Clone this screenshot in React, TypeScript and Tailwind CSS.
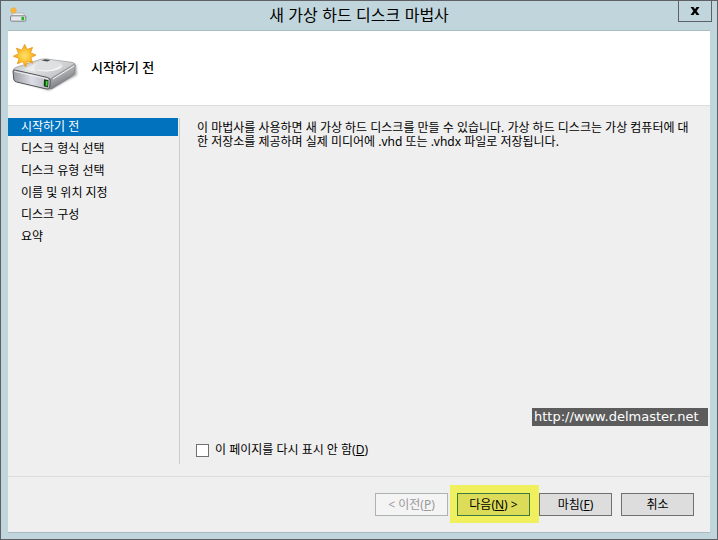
import { useState } from "react";

const steps = ["시작하기 전", "디스크 형식 선택", "디스크 유형 선택", "이름 및 위치 지정", "디스크 구성", "요약"];

const STAR =
  "M12 0 L14.6 5.4 L20.4 3.2 L18.2 8.8 L24 11.4 L18.5 14 L20.6 20 L15 17.8 L13 24 L10 18.3 L4.2 20.6 L6.2 15 L0 12.6 L5.6 9.9 L3.2 4 L9 6.1 Z";

function NewDriveIcon() {
  return (
    <svg viewBox="0 0 68 52" className="h-[52px] w-[68px]" aria-hidden="true">
      <defs>
        <linearGradient id="driveTop" x1="0" y1="0" x2="1" y2="0.6">
          <stop offset="0" stopColor="#b4b5b7" />
          <stop offset="0.45" stopColor="#e2e3e4" />
          <stop offset="1" stopColor="#bfc0c2" />
        </linearGradient>
        <linearGradient id="driveFront" x1="0" y1="0" x2="1" y2="0">
          <stop offset="0" stopColor="#9b9ca0" />
          <stop offset="0.5" stopColor="#dcdde6" />
          <stop offset="1" stopColor="#b4b5b9" />
        </linearGradient>
        <linearGradient id="driveSide" x1="0" y1="0" x2="0.5" y2="1">
          <stop offset="0" stopColor="#dedfe0" />
          <stop offset="0.55" stopColor="#a6a7aa" />
          <stop offset="1" stopColor="#6a6b6e" />
        </linearGradient>
        <radialGradient id="star">
          <stop offset="0" stopColor="#ffe26a" />
          <stop offset="0.6" stopColor="#fcbf2c" />
          <stop offset="1" stopColor="#ee9a13" />
        </radialGradient>
        <filter id="driveShadow" x="-20%" y="-20%" width="140%" height="150%">
          <feGaussianBlur stdDeviation="1.2" />
        </filter>
      </defs>
      <path d="M3 38 L37 48.5 L65 33 L64 22 L38 36Z" fill="#000" opacity="0.35" filter="url(#driveShadow)" />
      <path d="M1.2 27.2 Q2 26 5 25 L28 17.5 Q31 16.6 35 17 L60 20.3 Q63.5 21 62.5 22.4 L42 35.4 Q39 37.4 35 36.6 L3 29.5 Q0.6 28.6 1.2 27.2Z" fill="url(#driveTop)" stroke="#8e8f92" strokeWidth="0.6" />
      <ellipse cx="35.5" cy="24" rx="15" ry="5" fill="#dfe0e1" />
      <path d="M22 27 Q30 31 42 28.5 Q50 26 50.4 23 Q44 28 34 28.4 Q27 28.5 22 27Z" fill="#fff" opacity="0.85" />
      <path d="M12 27 L26 20.5 Q20 25 24 30Z" fill="#fff" opacity="0.4" />
      <path d="M29.5 18.4 L33 17.3 L38.5 18.1 L35.5 19.4Z" fill="#4b4c4f" />
      <path d="M40.5 35.6 L62.6 22 Q63.4 22 63.2 24 L62.4 31 Q62.2 33 60 34.2 L41 46.2 Q37 48.4 36.6 45 Q37 38 40.5 35.6Z" fill="url(#driveSide)" stroke="#77787b" strokeWidth="0.6" />
      <path d="M41 37 L62 24" stroke="#f5f5f5" strokeWidth="1" />
      <path d="M1 29 Q1.2 27.6 3.5 28.1 L35.5 35.5 Q38.6 36.4 38.3 39 L37.8 45 Q37.4 47.6 34.6 47 L4.6 40 Q2 39.3 1.7 37Z" fill="url(#driveFront)" stroke="#55565a" strokeWidth="1" />
      <path d="M2.4 29.4 L36 37" stroke="#f4f4f6" strokeWidth="0.9" />
      <path d="M32 37.3 L36.4 38.3 L36 45.3 L31.8 44.3Z" fill="#123d16" />
      <path d="M33.8 38.8 L35.7 39.2 L35.4 44 L33.6 43.6Z" fill="#3fdc35" />
      <g transform="translate(1.4 2.4) scale(0.94)">
        <path d={STAR} fill="url(#star)" stroke="#e89a22" strokeWidth="0.9" strokeLinejoin="round" />
      </g>
    </svg>
  );
}

function SmallDriveIcon() {
  return (
    <svg viewBox="0 0 17 16" className="h-4 w-[17px]" aria-hidden="true">
      <path d="M3 6 H13 L16 10 H0.5Z" fill="#eceded" stroke="#a3a5a7" strokeWidth="0.6" />
      <rect x="0.6" y="8.8" width="15.2" height="5.4" rx="1" fill="#e6e7ee" stroke="#77797d" strokeWidth="0.9" />
      <rect x="11.4" y="9.8" width="2.8" height="3.4" fill="#25b32a" />
      <path d={STAR} transform="scale(0.29)" fill="#fdb52b" stroke="#ef9a1c" strokeWidth="1" />
    </svg>
  );
}

const buttonClass =
  "h-[23px] w-[73px] border border-[#707070] bg-[#dddddd] text-center leading-5 text-black";

export default function App() {
  const [hidePage, setHidePage] = useState(false);

  return (
    <div className="flex min-h-screen flex-col border border-[#5f6066] bg-[#c1d5dc] font-['Noto_Sans','Noto_Sans_CJK_KR',sans-serif] text-xs text-black">
      {/* Title bar */}
      <header className="grid h-[29px] grid-cols-[1fr_auto_1fr] items-start px-[5px]">
        <div className="pt-1.5 pl-1">
          <SmallDriveIcon />
        </div>
        <h1 className="font-['Liberation_Sans','Noto_Sans_CJK_KR',sans-serif] text-base leading-[30px]">새 가상 하드 디스크 마법사</h1>
        <button
          type="button"
          aria-label="닫기"
          className="flex h-[21px] w-[34px] items-center justify-center justify-self-end border border-t-0 border-[#5f6066]"
        >
          <svg viewBox="0 0 10 8" className="h-2 w-2.5" aria-hidden="true">
            <path d="M0.5 0H3.5L5 2.2L6.5 0H9.5L6.6 4L9.5 8H6.5L5 5.8L3.5 8H0.5L3.4 4Z" fill="#000" />
          </svg>
        </button>
      </header>

      <div className="mx-[7px] mb-1.5 flex grow flex-col border-t border-b border-[#aabcc3] bg-[#efefef]">
        <div className="flex h-[75px] items-center border-b border-[#dcdcdc] bg-white pl-1">
          <NewDriveIcon />
          <h2 className="ml-[11px] text-[13px] font-medium">시작하기 전</h2>
        </div>

        <main className="relative flex grow pt-3 pb-3">
          <nav className="w-[172px] border-r border-[#cccccc]">
            <ul className="flex flex-col gap-1">
              {steps.map((step, i) => (
                <li key={step}>
                  <a
                    href="#"
                    aria-current={i === 0 ? "step" : undefined}
                    className={`mr-px block h-[18px] pl-[13px] leading-[18px] ${i === 0 ? "bg-[#0072be] text-white" : ""}`}
                  >
                    {step}
                  </a>
                </li>
              ))}
            </ul>
          </nav>
          <section className="flex flex-1 flex-col justify-between pr-4 pb-[5px] pl-4">
            <p className="pt-[3px] pl-px leading-[14px]">
              이 마법사를 사용하면 새 가상 하드 디스크를 만들 수 있습니다. 가상 하드 디스크는 가상 컴퓨터에 대한
              저장소를 제공하며 실제 미디어에 .vhd 또는 .vhdx 파일로 저장됩니다.
            </p>
            <label className="flex items-center gap-1.5 leading-[18px]">
              <input
                type="checkbox"
                checked={hidePage}
                onChange={(e) => setHidePage(e.target.checked)}
                className="size-[13px] appearance-none border border-[#707070] bg-white checked:bg-[#0072be]"
              />
              <span>
                이 페이지를 다시 표시 안 함(<u>D</u>)
              </span>
            </label>
          </section>
          <a
            href="http://www.delmaster.net"
            className="absolute right-0.5 bottom-[50px] h-[18px] w-[176px] bg-[#5c5c5c] pl-0.5 font-['DejaVu_Sans',sans-serif] text-[13px] leading-[18px] text-white"
          >
            http://www.delmaster.net
          </a>
        </main>

        {/* Wizard buttons */}
        <footer className="flex h-[56px] justify-end gap-[9px] border-t border-[#dcdcdc] pt-4 pr-4">
          <button type="button" disabled className="h-[23px] w-[73px] border border-[#adb2b5] bg-[#f4f4f4] leading-5 text-[#9a9a9a]">
            &lt; 이전(<u>P</u>)
          </button>
          <div className="relative">
            <div className="absolute -inset-x-[7px] -top-2 h-[38px] w-[89px] bg-[#f0ef5e]" />
            <button type="button" className="relative h-[23px] w-[73px] border border-[#3d7a3d] bg-[#dddc58] leading-5">
              다음(<u>N</u>) &gt;
            </button>
          </div>
          <button type="button" className={`relative ${buttonClass}`}>
            마침(<u>F</u>)
          </button>
          <button type="button" className={buttonClass}>
            취소
          </button>
        </footer>
      </div>
    </div>
  );
}
